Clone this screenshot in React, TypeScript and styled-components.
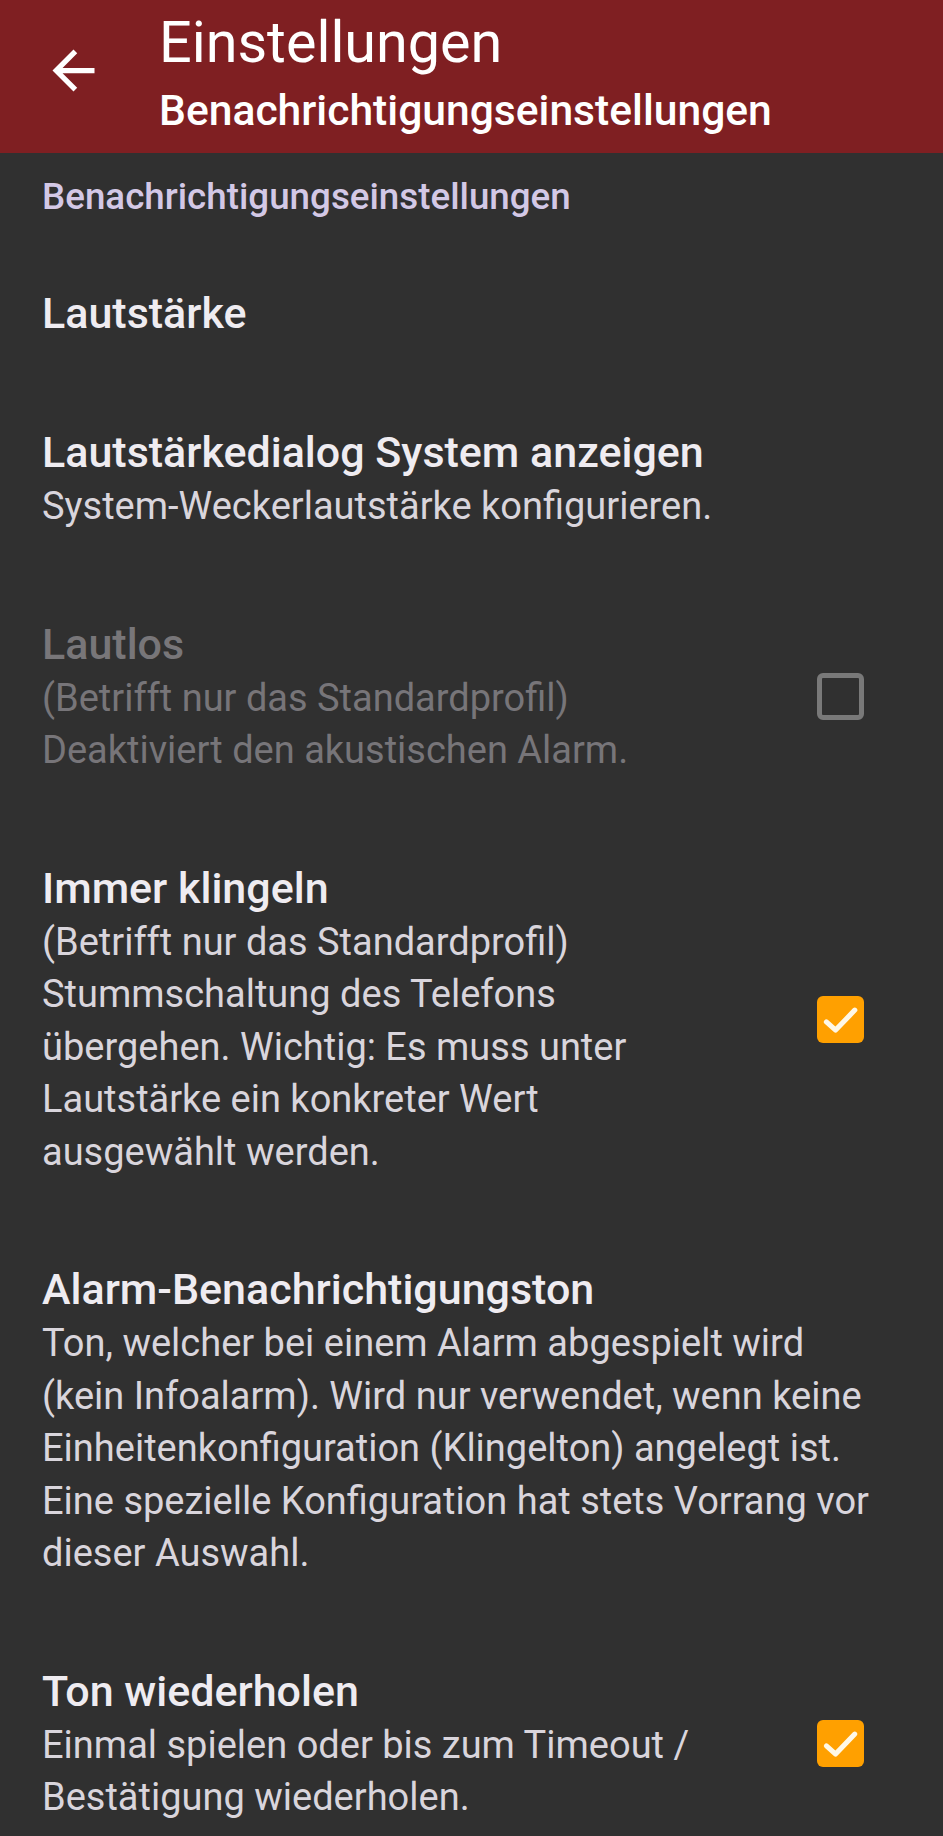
import React from "react";
import styled, { createGlobalStyle } from "styled-components";

const Global = createGlobalStyle`
  html, body { margin: 0; padding: 0; background: #303030; }
  body { font-family: Roboto, "Noto Sans", "Liberation Sans", sans-serif; -webkit-font-smoothing: antialiased; }
  * { box-sizing: border-box; }
`;

const Screen = styled.div`
  width: 943px;
  min-height: 1836px;
  background: #303030;
  display: flex;
  flex-direction: column;
`;

const AppBar = styled.header`
  height: 153px;
  background: #7f1f22;
  display: flex;
  align-items: flex-start;
  padding-left: 42px;
`;

const BackButton = styled.button`
  width: 63px;
  height: 63px;
  margin-top: 39px;
  padding: 0;
  border: none;
  background: transparent;
  color: #ffffff;
  display: flex;
  align-items: center;
  justify-content: center;
  flex-shrink: 0;
`;

const Titles = styled.div`
  display: flex;
  flex-direction: column;
  padding-top: 10px;
  margin-left: 54px;
  gap: 9px;
  color: #ffffff;
`;

const Title = styled.div`
  font-size: 57.5px;
  line-height: 66px;
  font-weight: 400;
`;

const Subtitle = styled.div`
  font-size: 42.6px;
  line-height: 50px;
  font-weight: 500;
`;

const Category = styled.div`
  padding: 22px 40px 25px 42px;
  font-size: 36.75px;
  line-height: 44px;
  font-weight: 500;
  color: #d3c8e6;
`;

const Item = styled.div`
  display: flex;
  align-items: center;
  padding: 42px 40px 42px 42px;
`;

const TextCol = styled.div<{ $widget?: boolean }>`
  flex: 1;
  min-width: 0;
  padding-right: ${(p) => (p.$widget ? "42px" : "23px")};
`;

const ItemTitle = styled.div<{ $disabled?: boolean }>`
  font-size: 43px;
  line-height: 55px;
  font-weight: 500;
  color: ${(p) => (p.$disabled ? "#787679" : "#efecf1")};
`;

const Summary = styled.div<{ $disabled?: boolean }>`
  font-size: 38px;
  line-height: 52.5px;
  font-weight: 400;
  color: ${(p) => (p.$disabled ? "#777579" : "#d9d5dc")};
  white-space: pre-line;
`;

const WidgetFrame = styled.div`
  width: 126px;
  height: 126px;
  display: flex;
  align-items: center;
  justify-content: center;
  flex-shrink: 0;
`;

const Box = styled.div<{ $checked?: boolean }>`
  width: 47px;
  height: 47px;
  border-radius: 6px;
  display: flex;
  align-items: center;
  justify-content: center;
  background: ${(p) => (p.$checked ? "#ffa000" : "transparent")};
  border: ${(p) => (p.$checked ? "none" : "5px solid #797979")};
`;

const Check = () => (
  <svg width="47" height="47" viewBox="0 0 24 24" fill="none">
    <path d="M4.8 13.2l4.7 4.2L19.3 7.2" stroke="#fff8e6" strokeWidth="2.6" strokeLinecap="round" strokeLinejoin="round" />
  </svg>
);

const Checkbox = ({ checked }: { checked?: boolean }) => (
  <WidgetFrame>
    <Box $checked={checked}>{checked && <Check />}</Box>
  </WidgetFrame>
);

type Pref = {
  title: string;
  summary?: string;
  disabled?: boolean;
  checkbox?: boolean;
  checked?: boolean;
};

const prefs: Pref[] = [
  { title: "Lautstärke" },
  { title: "Lautstärkedialog System anzeigen", summary: "System-Weckerlautstärke konfigurieren." },
  {
    title: "Lautlos",
    summary: "(Betrifft nur das Standardprofil)\nDeaktiviert den akustischen Alarm.",
    disabled: true,
    checkbox: true,
    checked: false,
  },
  {
    title: "Immer klingeln",
    summary:
      "(Betrifft nur das Standardprofil)\nStummschaltung des Telefons übergehen. Wichtig: Es muss unter Lautstärke ein konkreter Wert ausgewählt werden.",
    checkbox: true,
    checked: true,
  },
  {
    title: "Alarm-Benachrichtigungston",
    summary:
      "Ton, welcher bei einem Alarm abgespielt wird (kein Infoalarm). Wird nur verwendet, wenn keine Einheitenkonfiguration (Klingelton) angelegt ist. Eine spezielle Konfiguration hat stets Vorrang vor dieser Auswahl.",
  },
  {
    title: "Ton wiederholen",
    summary: "Einmal spielen oder bis zum Timeout / Bestätigung wiederholen.",
    checkbox: true,
    checked: true,
  },
];

export default function App() {
  return (
    <Screen>
      <Global />
      <AppBar>
        <BackButton aria-label="Zurück">
          <svg width="63" height="63" viewBox="0 0 24 24" fill="currentColor">
            <path d="M20 11H7.83l5.59-5.59L12 4l-8 8 8 8 1.41-1.41L7.83 13H20v-2z" />
          </svg>
        </BackButton>
        <Titles>
          <Title>Einstellungen</Title>
          <Subtitle>Benachrichtigungseinstellungen</Subtitle>
        </Titles>
      </AppBar>
      <Category>Benachrichtigungseinstellungen</Category>
      {prefs.map((p) => (
        <Item key={p.title}>
          <TextCol $widget={p.checkbox}>
            <ItemTitle $disabled={p.disabled}>{p.title}</ItemTitle>
            {p.summary && <Summary $disabled={p.disabled}>{p.summary}</Summary>}
          </TextCol>
          {p.checkbox && <Checkbox checked={p.checked} />}
        </Item>
      ))}
    </Screen>
  );
}
